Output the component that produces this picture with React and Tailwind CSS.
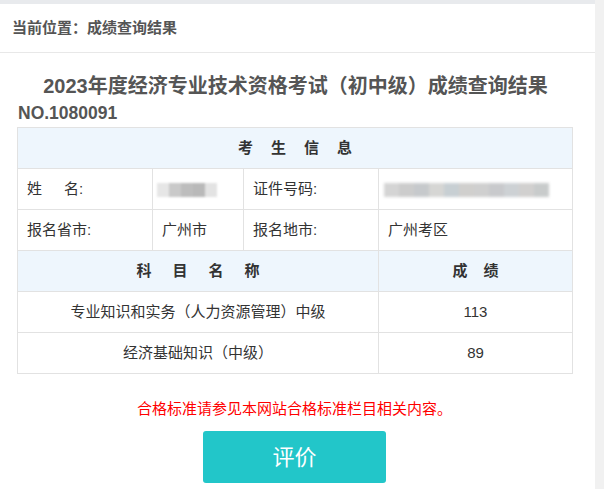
export default function App() {
  const font = { fontFamily: '"Liberation Sans", "Noto Sans CJK SC", sans-serif' };
  const nameBlocks = ["#e6e6e6", "#c9c9c9", "#bdbdbd", "#b9b9b9", "#e3e3e3"];
  const idBlocks = ["#d4d4d4", "#cccccc", "#c6c9cc", "#d6d6d4", "#c7cfd3", "#d0cfcd", "#cfcfcf", "#c8c9cc", "#cdd1d4", "#d1d0cf", "#c8cbcb"];

  return (
    <div className="w-[604px] h-[489px] bg-[#f1f1f1] flex overflow-hidden" style={font}>
      <main className="w-[595px] h-full bg-white flex flex-col border-t-4 border-[#e8eaed]">
        {/* BREADCRUMB */}
        <div className="h-[49px] shrink-0 border-b border-[#e8e8e8] flex items-center pl-[12px] text-[15px] font-bold text-[#555]">
          当前位置：成绩查询结果
        </div>

        <h1 className="mt-[20px] pr-[4px] text-center text-[20px] leading-[26px] font-bold text-[#555]">
          2023年度经济专业技术资格考试（初中级）成绩查询结果
        </h1>
        <div className="pl-[18px] mt-[4px] text-[17.5px] leading-[20px] font-bold text-[#555]">NO.1080091</div>

        {/* RESULT TABLE */}
        <div className="ml-[17px] w-[556px] border border-[#e2e2e2] text-[15px] text-[#333] mt-[4px]">
          <div className="h-[41px] bg-[#eef6fd] flex items-center justify-center font-bold tracking-[18px] pl-[18px] border-b border-[#e2e2e2]">
            考生信息
          </div>
          <div className="h-[41px] grid grid-cols-[135px_91px_135px_1fr] border-b border-[#e2e2e2]">
            <div className="flex items-center pl-[9px] border-r border-[#e2e2e2]">
              <span>姓</span>
              <span className="ml-[22px]">名:</span>
            </div>
            <div className="flex items-center border-r border-[#e2e2e2] pl-[4px]">
              <div className="flex blur-[1px] mt-[2px]">
                {nameBlocks.map((c, i) => (
                  <div key={i} className="w-[12px] h-[14px]" style={{ background: c }} />
                ))}
              </div>
            </div>
            <div className="flex items-center pl-[9px] border-r border-[#e2e2e2]">证件号码:</div>
            <div className="flex items-center pl-[5px]">
              <div className="flex blur-[1.5px] mt-[2px]">
                {idBlocks.map((c, i) => (
                  <div key={i} className="w-[15px] h-[14px]" style={{ background: c }} />
                ))}
              </div>
            </div>
          </div>
          <div className="h-[41px] grid grid-cols-[135px_91px_135px_1fr] border-b border-[#e2e2e2]">
            <div className="flex items-center pl-[9px] border-r border-[#e2e2e2]">报名省市:</div>
            <div className="flex items-center pl-[9px] border-r border-[#e2e2e2]">广州市</div>
            <div className="flex items-center pl-[9px] border-r border-[#e2e2e2]">报名地市:</div>
            <div className="flex items-center pl-[9px]">广州考区</div>
          </div>
          <div className="h-[41px] grid grid-cols-[361px_1fr] bg-[#eef6fd] font-bold border-b border-[#e2e2e2]">
            <div className="flex items-center justify-center tracking-[21px] pl-[21px] border-r border-[#e2e2e2]">科目名称</div>
            <div className="flex items-center justify-center tracking-[16px] pl-[16px]">成绩</div>
          </div>
          <div className="h-[41px] grid grid-cols-[361px_1fr] border-b border-[#e2e2e2]">
            <div className="flex items-center justify-center border-r border-[#e2e2e2]">专业知识和实务（人力资源管理）中级</div>
            <div className="flex items-center justify-center">113</div>
          </div>
          <div className="h-[40px] grid grid-cols-[361px_1fr]">
            <div className="flex items-center justify-center border-r border-[#e2e2e2]">经济基础知识（中级）</div>
            <div className="flex items-center justify-center">89</div>
          </div>
        </div>

        <p className="mt-[25px] pr-[6px] text-center text-[15px] leading-[20px] text-[#ff0000]">合格标准请参见本网站合格标准栏目相关内容。</p>
        <div className="flex justify-center mt-[12px] pr-[6px]">
          <button className="w-[183px] h-[52px] rounded-[3px] bg-[#22c6c9] text-white text-[22px]">评价</button>
        </div>
      </main>
    </div>
  );
}
